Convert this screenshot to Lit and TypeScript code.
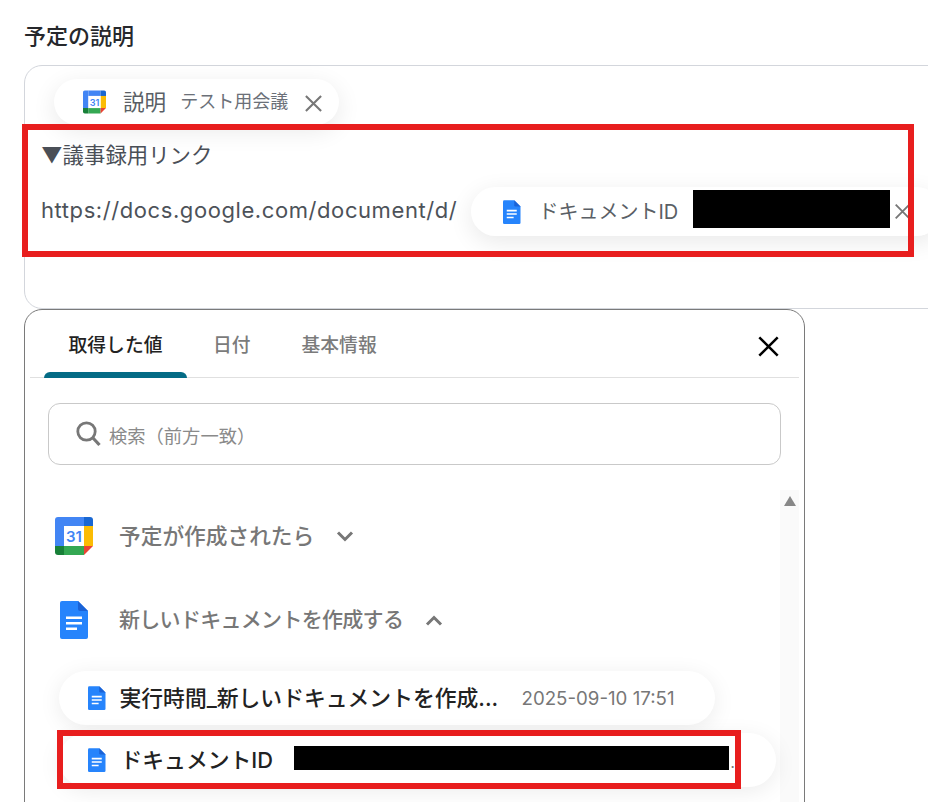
import { LitElement, html, css, svg } from "lit";
import { customElement } from "lit/decorators.js";

const calIcon = (cls: string) => html`<svg class=${cls} viewBox="0 0 38 38" aria-hidden="true">
  ${svg`
  <path d="M9 0H29V9H9Z" fill="#4285f4"/>
  <path d="M3 0H9V29H0V3A3 3 0 0 1 3 0Z" fill="#4285f4"/>
  <path d="M29 0H35A3 3 0 0 1 38 3V9H29Z" fill="#1967d2"/>
  <path d="M29 9H38V29H29Z" fill="#fbbc04"/>
  <path d="M9 29H29V38H9Z" fill="#34a853"/>
  <path d="M0 29H9V38H3A3 3 0 0 1 0 35Z" fill="#188038"/>
  <path d="M29 29H38L29 38Z" fill="#ea4335"/>
  <rect x="9" y="9" width="20" height="20" fill="#fff"/>
  <text x="19" y="25" text-anchor="middle" font-family="Inter, sans-serif" font-size="15" font-weight="600" fill="#4285f4">31</text>`}
</svg>`;

const docIcon = (cls: string) => html`<svg class=${cls} viewBox="0 0 28 38" aria-hidden="true">
  ${svg`
  <path d="M2 0H18L28 10V36A2 2 0 0 1 26 38H2A2 2 0 0 1 0 36V2A2 2 0 0 1 2 0Z" fill="#2684fc"/>
  <path d="M18 0L28 10H20A2 2 0 0 1 18 8Z" fill="#1a62d6"/>
  <path d="M6 15.5H22V18H6ZM6 21H22V23.5H6ZM6 26.5H17V29H6Z" fill="#fff"/>`}
</svg>`;

const xIcon = (cls: string) => html`<svg class=${cls} viewBox="0 0 20 20" aria-hidden="true">
  ${svg`<path d="M2 2L18 18M18 2L2 18" fill="none" stroke="currentColor" stroke-width="2.2"/>`}
</svg>`;

const chevron = (up: boolean) => html`<svg class="chev" viewBox="0 0 18 11" aria-hidden="true">
  ${svg`<path d=${up ? "M2 9.5L9 2.5L16 9.5" : "M2 1.5L9 8.5L16 1.5"} fill="none" stroke="#777" stroke-width="3"/>`}
</svg>`;

@customElement("app-root")
export class AppRoot extends LitElement {
  static styles = css`
    :host {
      display: block;
      width: 928px;
      height: 802px;
      overflow: hidden;
      background: #fff;
      font-family: Inter, "Noto Sans CJK JP", sans-serif;
      color: #4a4f57;
      box-sizing: border-box;
      padding-left: 24px;
    }
    * { box-sizing: border-box; }
    .title {
      height: 65px;
      padding-top: 20px;
      font-size: 22px;
      line-height: 32px;
      font-weight: 500;
      color: #26282c;
    }
    .editor {
      position: relative;
      width: 1000px;
      height: 244px;
      border: 1px solid #d3d6dc;
      border-radius: 18px;
      padding: 13px 0 0 16px;
      display: flex;
      flex-direction: column;
    }
    .tag {
      display: flex;
      align-items: center;
      background: #fff;
      border-radius: 26px;
      box-shadow: 0 6px 24px rgba(0, 0, 0, 0.09);
      flex: none;
    }
    .tag-cal {
      width: 285px;
      height: 46px;
      margin-left: 13px;
      padding-left: 29px;
      color: #5a5f66;
    }
    .i-cal-s { width: 23px; height: 24px; flex: none; }
    .tag-label { font-size: 21.6px; margin-left: 17px; line-height: 30px; }
    .tag-value { font-size: 18px; margin-left: 14px; color: #6b7078; line-height: 30px; }
    .x { color: #777; flex: none; }
    .x-cal { width: 19px; height: 19px; margin-left: 16px; margin-top: 2px; }
    .line-a {
      margin-top: 13px;
      height: 34px;
      font-size: 21.4px;
      line-height: 34px;
      color: #4a4f57;
    }
    .line-b {
      margin-top: 15px;
      display: flex;
      align-items: center;
      height: 49px;
    }
    .url {
      font-size: 22px;
      letter-spacing: 0.58px;
      line-height: 30px;
      white-space: nowrap;
      width: 430px;
      flex: none;
      color: #4d5259;
      margin-top: -3px;
    }
    .tag-doc {
      width: 470px;
      height: 49px;
      padding-left: 32px;
      color: #5a5f66;
    }
    .i-doc-s { width: 17.5px; height: 24px; flex: none; }
    .tag-doc .tag-label { margin-left: 18px; font-size: 20px; width: 139px; flex: none; white-space: nowrap; }
    .redact-a { width: 197px; height: 38px; background: #000; margin-left: 15px; flex: none; margin-top: -6px; }
    .x-doc { width: 17px; height: 17px; margin-left: 4px; }
    .mark {
      position: absolute;
      border: 6px solid #e81e1e;
      pointer-events: none;
    }
    .mark-a { left: -3px; top: 58px; width: 892px; height: 133px; }
    .panel {
      position: relative;
      width: 781px;
      height: 600px;
      border: 1px solid #7a7a7a;
      border-radius: 18px;
      background: #fff;
      padding: 0 5px;
    }
    .tabs {
      display: flex;
      height: 68px;
      border-bottom: 1px solid #e0e0e0;
      position: relative;
      padding-left: 14px;
    }
    .tab {
      height: 67px;
      padding: 21px 0 0;
      font-size: 18.8px;
      line-height: 30px;
      font-weight: 500;
      color: #7b7b7b;
      text-align: center;
      position: relative;
      flex: none;
    }
    .tab.on { width: 143px; color: #222; margin-right: 26px; }
    .tab.on::after {
      content: "";
      position: absolute;
      left: 0;
      right: 0;
      bottom: -1px;
      height: 6px;
      background: #046b85;
      border-radius: 6px 6px 0 0;
    }
    .tab.two { margin-right: 51px; }
    .close {
      margin-left: auto;
      margin-right: 19px;
      margin-top: 25px;
      width: 23px;
      height: 23px;
      color: #000;
    }
    .search {
      margin: 25px 18px 0 18px;
      height: 62px;
      border: 1px solid #c9c9c9;
      border-radius: 12px;
      display: flex;
      align-items: center;
      padding-left: 27px;
    }
    .mag { width: 25px; height: 26px; flex: none; }
    .ph { margin-left: 8px; margin-top: 3px; font-size: 18.3px; color: #8a8a8a; line-height: 28px; }
    .body {
      position: relative;
      margin-top: 25px;
      height: 420px;
    }
    .bar {
      position: absolute;
      right: 0;
      top: 0;
      bottom: 0;
      width: 19px;
      background: #fafafa;
    }
    .arrow {
      margin: 6px auto 0;
      width: 0;
      height: 0;
      border-left: 6px solid transparent;
      border-right: 6px solid transparent;
      border-bottom: 10px solid #888;
    }
    .group {
      display: flex;
      align-items: center;
      font-weight: 500;
      color: #777;
      line-height: 30px;
    }
    .g1 { padding: 27px 0 0 25px; height: 65px; font-size: 21.7px; }
    .g2 { padding: 0 0 0 30px; margin-top: 46px; height: 38px; font-size: 21px; }
    .i-cal-l { width: 38px; height: 38px; flex: none; }
    .i-doc-l { width: 28px; height: 38px; flex: none; }
    .g1 .gt { margin-left: 26px; width: 195px; flex: none; white-space: nowrap; }
    .g2 .gt { margin-left: 31px; width: 286px; flex: none; letter-spacing: -0.7px; white-space: nowrap; }
    .chev { width: 18px; height: 11px; margin-left: 22px; flex: none; }
    .g2 .chev { margin-left: 20px; }
    .items {
      position: relative;
      margin: 32px 19px 0 0;
      padding-bottom: 20px;
    }
    .item {
      display: flex;
      align-items: center;
      height: 54px;
      background: #fff;
      border-radius: 27px;
      margin-left: 29px;
      box-shadow: 0 4px 22px rgba(0, 0, 0, 0.08);
      padding-left: 29px;
      color: #222;
      font-weight: 500;
      font-size: 21.8px;
      white-space: nowrap;
    }
    .i-doc-m { width: 17.5px; height: 24px; flex: none; }
    .item-a { width: 656px; }
    .item-b { width: 717px; margin-top: 8px; }
    .item-text { margin-left: 14px; width: 382px; overflow: hidden; flex: none; margin-top: -3px; }
    .item-date { margin-left: 20px; font-size: 18.7px; font-weight: 400; color: #777; }
    .item-id { margin-left: 15px; width: 152px; flex: none; margin-top: -3px; }
    .redact-b { width: 435px; height: 24px; background: #000; margin-left: 21px; flex: none; margin-top: -5px; }
    .dot { font-size: 14px; color: #777; margin-left: 2px; align-self: center; margin-top: 4px; }
    .mark-b { left: 27px; top: 59px; width: 684px; height: 59px; }
  `;

  render() {
    return html`
      <div class="title">予定の説明</div>
      <div class="editor">
        <div class="tag tag-cal">
          ${calIcon("i-cal-s")}
          <span class="tag-label">説明</span>
          <span class="tag-value">テスト用会議</span>
          ${xIcon("x x-cal")}
        </div>
        <div class="line-a">▼議事録用リンク</div>
        <div class="line-b">
          <span class="url">https://docs.google.com/document/d/</span>
          <div class="tag tag-doc">
            ${docIcon("i-doc-s")}
            <span class="tag-label">ドキュメントID</span>
            <span class="redact-a"></span>
            ${xIcon("x x-doc")}
          </div>
        </div>
        <div class="mark mark-a"></div>
      </div>
      <div class="panel">
        <div class="tabs">
          <div class="tab on">取得した値</div>
          <div class="tab two">日付</div>
          <div class="tab">基本情報</div>
          ${xIcon("close")}
        </div>
        <div class="search">
          <svg class="mag" viewBox="0 0 25 26" aria-hidden="true">
            <circle cx="10.5" cy="10.5" r="8.7" fill="none" stroke="#777" stroke-width="2.8"></circle>
            <path d="M17 17L23.5 24" fill="none" stroke="#777" stroke-width="3.2"></path>
          </svg>
          <span class="ph">検索（前方一致）</span>
        </div>
        <div class="body">
          <div class="bar"><div class="arrow"></div></div>
          <div class="group g1">
            ${calIcon("i-cal-l")}
            <span class="gt">予定が作成されたら</span>
            ${chevron(false)}
          </div>
          <div class="group g2">
            ${docIcon("i-doc-l")}
            <span class="gt">新しいドキュメントを作成する</span>
            ${chevron(true)}
          </div>
          <div class="items">
            <div class="item item-a">
              ${docIcon("i-doc-m")}
              <span class="item-text">実行時間_新しいドキュメントを作成...</span>
              <span class="item-date">2025-09-10 17:51</span>
            </div>
            <div class="item item-b">
              ${docIcon("i-doc-m")}
              <span class="item-id">ドキュメントID</span>
              <span class="redact-b"></span>
              <span class="dot">.</span>
            </div>
            <div class="mark mark-b"></div>
          </div>
        </div>
      </div>
    `;
  }
}
